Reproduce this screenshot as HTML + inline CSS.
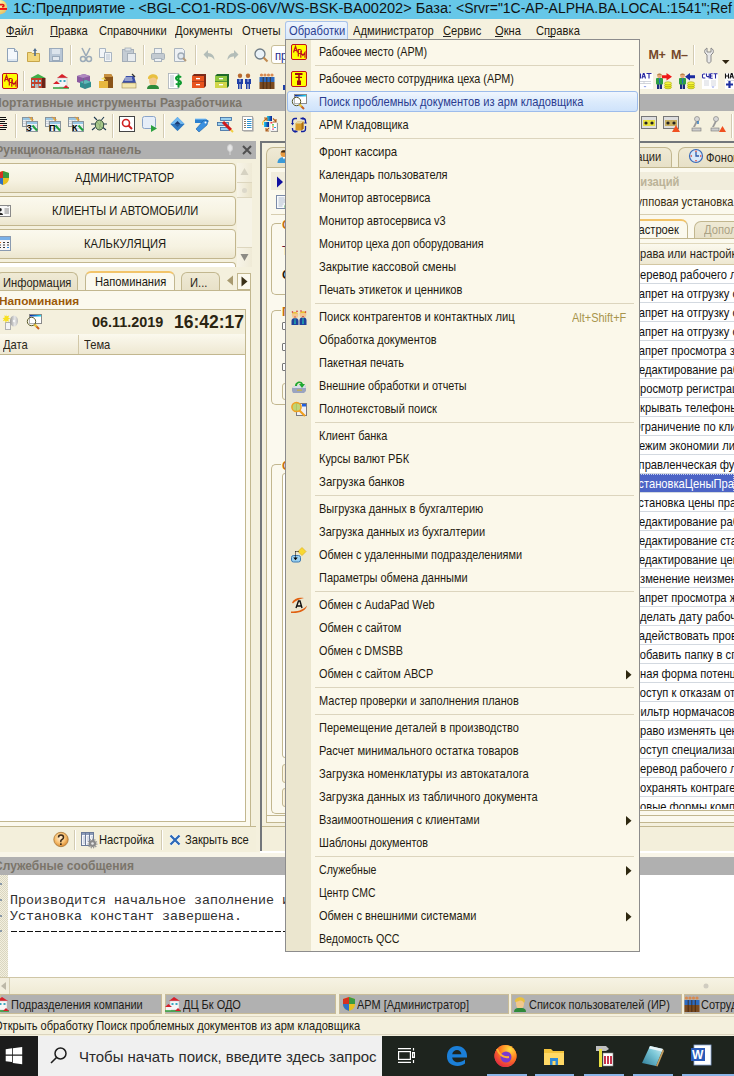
<!DOCTYPE html><html><head><meta charset="utf-8"><style>
*{margin:0;padding:0;box-sizing:border-box}
html,body{width:734px;height:1076px;overflow:hidden}
body{position:relative;background:#F4F0DD;font-family:"Liberation Sans",sans-serif;font-size:11px;color:#000}
body div{position:absolute}
.t{white-space:nowrap;line-height:1}
.m{font-size:12.2px;transform:scaleX(.917);transform-origin:0 0}
svg{position:absolute;overflow:visible}
</style></head><body>
<div style="left:0px;top:0px;width:734px;height:19px;background:#66C7E8"></div>
<svg style="left:0;top:0" width="10" height="18"><defs><radialGradient id="lg1" cx=".3" cy=".25" r=".85"><stop offset="0" stop-color="#FFFCE8"/><stop offset=".55" stop-color="#F6E27A"/><stop offset="1" stop-color="#E2B868"/></radialGradient></defs><circle cx="0" cy="7.2" r="7.2" fill="url(#lg1)"/><rect x="0" y="8" width="7" height="1.9" fill="#F01010"/><path d="M0 4.6h2.6q1.3 0 1.3 1.1t-1.3 1.1H2" stroke="#E01818" stroke-width="1.6" fill="none"/></svg>
<div class="t" style="left:13px;top:-0.5px;font-size:15.5px;color:#111;transform:scaleX(.939);transform-origin:0 0">1C:Предприятие - &lt;BGL-CO1-RDS-06V/WS-BSK-BA00202&gt; База:</div>
<div class="t" style="left:455.5px;top:-0.5px;font-size:15.5px;color:#111;transform:scaleX(.9004);transform-origin:0 0">&lt;Srvr="1C-AP-ALPHA.BA.LOCAL:1541";Ref</div>
<div style="left:0px;top:19px;width:734px;height:21px;background:#F5F1DF"></div>
<div style="left:285px;top:21px;width:63px;height:19px;background:linear-gradient(#EEF5FD,#D8E8FB);border:1px solid #A9C3EA;border-bottom:none;border-radius:3px 3px 0 0"></div>
<div class="t m" style="left:6px;top:25px;color:#1E1A10">Файл</div>
<div class="t m" style="left:50px;top:25px;color:#1E1A10">Правка</div>
<div class="t m" style="left:99px;top:25px;color:#1E1A10">Справочники</div>
<div class="t m" style="left:175px;top:25px;color:#1E1A10">Документы</div>
<div class="t m" style="left:242px;top:25px;color:#1E1A10">Отчеты</div>
<div class="t m" style="left:289px;top:25px;color:#2B3F93">Обработки</div>
<div class="t m" style="left:353px;top:25px;color:#1E1A10">Администратор</div>
<div class="t m" style="left:443px;top:25px;color:#1E1A10">Сервис</div>
<div class="t m" style="left:495px;top:25px;color:#1E1A10">Окна</div>
<div class="t m" style="left:536px;top:25px;color:#1E1A10">Справка</div>
<div style="left:6px;top:36px;width:11px;height:1px;background:#222"></div>
<div style="left:50px;top:36px;width:8px;height:1px;background:#222"></div>
<div style="left:443px;top:36px;width:8px;height:1px;background:#222"></div>
<div style="left:495px;top:36px;width:8px;height:1px;background:#222"></div>
<div style="left:548px;top:36px;width:7px;height:1px;background:#222"></div>
<div style="left:0px;top:40px;width:734px;height:54px;background:#F5F1DF"></div>
<svg style="left:4px;top:47px" width="16" height="16" viewBox="0 0 16 16"><path d="M3.5 1.5h7l3 3v10h-10z" fill="#F4F8FC" stroke="#8FA2B8"/><path d="M10.5 1.5v3h3" fill="#DDE6F0" stroke="#8FA2B8"/><path d="M4 12h9v2H4z" fill="#DCE6F0"/></svg>
<svg style="left:26px;top:47px" width="16" height="16" viewBox="0 0 16 16"><path d="M1.5 5.5h4l1 1h7v8h-12z" fill="#F2D77C" stroke="#C7A54A"/><path d="M9 1l-2 3h1.2v5h1.6v-5h1.2z" fill="#4E6D8E"/></svg>
<svg style="left:48px;top:47px" width="16" height="16" viewBox="0 0 16 16"><rect x="1.5" y="1.5" width="13" height="13" fill="#B9C7D6" stroke="#9AAABB"/><rect x="4" y="2" width="8" height="5" fill="#DCE4EC"/><rect x="4.5" y="9.5" width="7" height="4" fill="#E2E8EE" stroke="#9AAABB"/></svg>
<svg style="left:78px;top:47px" width="16" height="16" viewBox="0 0 16 16"><path d="M4 1l4 8M12 1l-4 8" stroke="#9BAAB8" stroke-width="1.6"/><circle cx="5" cy="12" r="2.5" fill="none" stroke="#9BAAB8" stroke-width="1.5"/><circle cx="11" cy="12" r="2.5" fill="none" stroke="#9BAAB8" stroke-width="1.5"/></svg>
<svg style="left:98px;top:47px" width="16" height="16" viewBox="0 0 16 16"><path d="M1.5 1.5h6v9h-6z" fill="#F2F5F8" stroke="#A9B5C2"/><path d="M6.5 5.5h7v9h-7z" fill="#F2F5F8" stroke="#A9B5C2"/><path d="M8 8h4M8 10h4M8 12h4" stroke="#B7C2CE"/></svg>
<svg style="left:121px;top:47px" width="16" height="16" viewBox="0 0 16 16"><rect x="1.5" y="2.5" width="11" height="12" fill="#C4CCD4" stroke="#A4AEB8"/><rect x="4" y="1" width="6" height="3" fill="#DDE2E6" stroke="#A4AEB8" stroke-width=".8"/><rect x="6.5" y="6.5" width="8" height="8" fill="#E8ECEF" stroke="#A4AEB8"/></svg>
<svg style="left:150px;top:47px" width="16" height="16" viewBox="0 0 16 16"><rect x="4.5" y="1.5" width="7" height="5" fill="#EEF1F4" stroke="#AAB4BE"/><rect x="1.5" y="6.5" width="13" height="6" rx="1" fill="#C3CAD1" stroke="#A5AFB8"/><rect x="4.5" y="11.5" width="7" height="3" fill="#EEF1F4" stroke="#AAB4BE"/></svg>
<svg style="left:172px;top:47px" width="16" height="16" viewBox="0 0 16 16"><path d="M2.5 1.5h8l2 2v11h-10z" fill="#EEF1F4" stroke="#AAB4BE"/><circle cx="9" cy="9" r="3" fill="#E2E8EE" stroke="#9FAAB5" stroke-width="1.3"/><path d="M11 11l3 3" stroke="#B59A7A" stroke-width="2"/></svg>
<svg style="left:202px;top:47px" width="16" height="16" viewBox="0 0 16 16"><path d="M6 3L1.5 7.5 6 12V9.5c3 0 5 1 6.5 3.5 0-4-2.5-7-6.5-7z" fill="#B3BDB8"/></svg>
<svg style="left:224px;top:47px" width="16" height="16" viewBox="0 0 16 16"><path d="M10 3l4.5 4.5L10 12V9.5c-3 0-5 1-6.5 3.5 0-4 2.5-7 6.5-7z" fill="#B3BDB8"/></svg>
<svg style="left:253px;top:47px" width="16" height="16" viewBox="0 0 16 16"><circle cx="7" cy="7" r="5" fill="#EAF2F8" stroke="#6F7C86" stroke-width="1.3"/><path d="M10.5 10.5l4 4" stroke="#C08A50" stroke-width="2.2"/></svg>
<div style="left:70px;top:45px;width:1px;height:20px;background:#D3CBB2"></div>
<div style="left:71px;top:45px;width:1px;height:20px;background:#FFFFFF"></div>
<div style="left:143px;top:45px;width:1px;height:20px;background:#D3CBB2"></div>
<div style="left:144px;top:45px;width:1px;height:20px;background:#FFFFFF"></div>
<div style="left:195px;top:45px;width:1px;height:20px;background:#D3CBB2"></div>
<div style="left:196px;top:45px;width:1px;height:20px;background:#FFFFFF"></div>
<div style="left:245px;top:45px;width:1px;height:20px;background:#D3CBB2"></div>
<div style="left:246px;top:45px;width:1px;height:20px;background:#FFFFFF"></div>
<div style="left:271px;top:45px;width:30px;height:19px;background:#FFF;border:1px solid #C9BE98;border-radius:3px 0 0 3px"></div>
<div class="t m" style="left:275px;top:50px;color:#1B2A8A;">пр</div>
<div class="t" style="left:648.5px;top:48.5px;font-weight:bold;font-size:12.5px;color:#74482A;letter-spacing:-0.3px">M+</div>
<div class="t" style="left:671px;top:48.5px;font-weight:bold;font-size:12.5px;color:#74482A;letter-spacing:-0.3px">M–</div>
<div style="left:693px;top:45px;width:1px;height:20px;background:#D3CBB2"></div>
<div style="left:694px;top:45px;width:1px;height:20px;background:#FFFFFF"></div>
<svg style="left:702px;top:47px" width="12" height="16" viewBox="0 0 12 16"><path d="M5 1c-2 1-3 3-2 5l2 2v6c0 1 1 2 2 2s2-1 2-2V8l2-2c1-2 0-4-2-5v4H5z" fill="#E8E8E8" stroke="#8A8A8A"/></svg>
<svg style="left:722px;top:60px" width="8" height="4" viewBox="0 0 8 4"><path d="M0 0h7.5l-3.75 4z" fill="#2E2410"/></svg>
<svg style="left:2px;top:73px" width="16" height="16" viewBox="0 0 16 16"><rect x="0.5" y="0.5" width="15" height="15" rx="1.5" fill="#FFFF00" stroke="#C0141C"/><path d="M2.5 8.5L4.5 2.5L6.5 8.5M3.2 6.5H5.8M7.3 12.5V5.5H9Q10.5 5.5 10.5 7.5Q10.5 9.5 9 9.5H7.3M9.8 13.8V8.5L11.9 11.5L14 8.5V13.8" stroke="#C0141C" stroke-width="1.2" fill="none"/></svg>
<svg style="left:30px;top:73px" width="16" height="16" viewBox="0 0 16 16"><path d="M0.5 5l7.5-4 7.5 4z" fill="#3FAF48"/><rect x="1" y="5" width="11" height="10" fill="#C0452E"/><rect x="12" y="5" width="3.5" height="10" fill="#6A2418"/><path d="M2 7h2v2H2zM5.5 7h2v2h-2zM9 7h2v2H9zM2 11h2v2H2zM9 11h2v2H9z" fill="#8FD8F0"/><rect x="5" y="11" width="3.5" height="4" fill="#B8B8B8"/></svg>
<svg style="left:53px;top:73px" width="16" height="16" viewBox="0 0 16 16"><path d="M4 5l5-4 6 4z" fill="#D8202A"/><rect x="5" y="5" width="9" height="9" fill="#F6F6F6" stroke="#BBB" stroke-width=".5"/><path d="M6.5 7h2v2h-2zM10.5 7h2v2h-2z" fill="#3BA7C0"/><path d="M0 11l3.5-3 3.5 3z" fill="#D8202A"/><rect x="1" y="11" width="5" height="4" fill="#F4F4F4"/><path d="M0 15h16" stroke="#2E9E3A" stroke-width="1.5"/><path d="M10 15l3-3 3 3z" fill="#D8202A"/></svg>
<svg style="left:76px;top:73px" width="16" height="16" viewBox="0 0 16 16"><path d="M1 3l7-2 6 2v6l-7 2-6-2z" fill="#8B5AA0"/><path d="M1 3l7-2 6 2-7 2z" fill="#B08AC0"/><path d="M4 9l6-2 5 2v5l-6 2-5-2z" fill="#2E8E8E"/><path d="M4 9l6-2 5 2-6 2z" fill="#60B8B8"/><path d="M7.5 5v6M9 11v5" stroke="#5A7A8A" stroke-width=".8"/></svg>
<svg style="left:98px;top:73px" width="16" height="16" viewBox="0 0 16 16"><path d="M6 1h7l2 3v6H6z" fill="#8A5418"/><path d="M6 1h7l2 3H6z" fill="#C89040"/><path d="M1 8h9v7H1z" fill="#E8B840"/><path d="M10 8h5v7h-5z" fill="#8A5418"/><path d="M3 6l3-2 2 3" fill="#F8E060"/></svg>
<svg style="left:121px;top:73px" width="16" height="16" viewBox="0 0 16 16"><path d="M1 10l4-7h8l2 7z" fill="#3B4FA8"/><path d="M4 5h7M3.5 7h8" stroke="#F0F0F0" stroke-width="1"/><rect x="1" y="10" width="14" height="5" fill="#F3E7B0" stroke="#A08A50" stroke-width=".6"/><path d="M11 1l3 3" stroke="#333" stroke-width="1.2"/></svg>
<svg style="left:145px;top:73px" width="16" height="16" viewBox="0 0 16 16"><path d="M4 6c0-5 8-6 8-1v3c0 3-2 5-4 5s-4-2-4-5z" fill="#F1C88D"/><path d="M3 6c-1-5 9-7 10-1l-1 2c-1-2-3-3-5-2-1 0-2 1-4 1z" fill="#E8C040"/><path d="M2 16c0-3 2-4 4-4h4c2 0 4 1 4 4z" fill="#2E8A3A"/></svg>
<svg style="left:168px;top:73px" width="16" height="16" viewBox="0 0 16 16"><rect x="0.5" y="0.5" width="10" height="15" fill="#FFF" stroke="#A8B0B8" stroke-width=".8"/><path d="M2 3h4M2 5h4M2 7h4M2 9h4M2 11h4M2 13h4" stroke="#8899AA" stroke-width=".6"/><path d="M13 4.5c-1-1.5-5-1.5-5 1s5 1.5 5 4-4 2.5-5 1M10.5 1.5v13" stroke="#0E9A30" stroke-width="2" fill="none"/></svg>
<svg style="left:191px;top:73px" width="16" height="16" viewBox="0 0 16 16"><path d="M3 1h12v12l-2 2H1V3z" fill="#7A2A1A"/><rect x="1" y="3" width="12" height="5.5" fill="#E8541E"/><rect x="1" y="9" width="12" height="6" fill="#E8541E"/><rect x="5" y="5" width="4" height="1.3" fill="#FFF"/><rect x="5" y="11" width="4" height="1.3" fill="#FFF"/></svg>
<svg style="left:214px;top:73px" width="16" height="16" viewBox="0 0 16 16"><path d="M3 1h12v12l-2 2H1V3z" fill="#1F6A2A"/><rect x="1" y="3" width="12" height="5.5" fill="#8DC63F"/><rect x="1" y="9" width="12" height="6" fill="#D2D74A"/><rect x="5" y="5" width="4" height="1.3" fill="#FFF"/><rect x="5" y="11" width="4" height="1.3" fill="#FFF"/></svg>
<svg style="left:236px;top:73px" width="16" height="16" viewBox="0 0 16 16"><circle cx="4" cy="2.8" r="2.2" fill="#B86A30"/><circle cx="12" cy="2.8" r="2.2" fill="#B86A30"/><path d="M1 6h6v5H6v5H4.5v-5h-1v5H2v-5H1zM9 6h6v5h-1v5h-1.5v-5h-1v5H10v-5H9z" fill="#1F3FA8"/><path d="M4 6v3M12 6v3" stroke="#E8E8F8" stroke-width=".8"/></svg>
<svg style="left:259px;top:73px" width="16" height="16" viewBox="0 0 16 16"><circle cx="2.5" cy="2" r="1.6" fill="#D88A50"/><circle cx="6" cy="2" r="1.6" fill="#D88A50"/><circle cx="9.5" cy="2" r="1.6" fill="#D88A50"/><circle cx="13" cy="2" r="1.6" fill="#D88A50"/><rect x="0.5" y="4" width="15" height="5" fill="#2C6AC0"/><rect x="0.5" y="9" width="15" height="7" fill="#7A4A20"/><path d="M4.2 4v12M7.8 4v12M11.3 4v12" stroke="#3E2410" stroke-width=".8"/></svg>
<svg style="left:637px;top:73px" width="16" height="16" viewBox="0 0 16 16"><rect x="0" y="0" width="16" height="16" fill="#FFF"/><path d="M.5 5.5V.5M3.5 5.5V.5M.5 3h3M5 5.5L6.3.5h.8L8.5 5.5M5.6 3.8h2.3M9.5.5h5M12 .5v5" stroke="#2828A0" stroke-width="1.1" fill="none"/><path d="M2 8.5h12M2 10.5h12M7 8v3" stroke="#C8CCD4" stroke-width=".8"/><path d="M6.5 13h3L8 14.5z" fill="#8A9AE8"/></svg>
<svg style="left:656px;top:73px" width="16" height="16" viewBox="0 0 16 16"><rect x="1" y="11" width="5" height="5" fill="#1A2A80"/><path d="M3.5 11v5" stroke="#F5F1DF" stroke-width=".6"/><rect x="0" y="5" width="7" height="6.5" rx="1" fill="#2EA040"/><rect x="3" y="5" width="1.2" height="5.5" fill="#2A6AC0"/><circle cx="3.5" cy="2.8" r="2.4" fill="#E8A878"/><path d="M1 2.5C1 0 6 0 6 2.5L5 1.5H2z" fill="#8A5A20"/><path d="M6 2.3h4.5V0l5.5 3.8-5.5 3.8V5.3H6z" fill="#F01818"/><ellipse cx="12" cy="14.3" rx="3.5" ry="1.5" fill="#E8E818" stroke="#A0A010" stroke-width=".6"/><ellipse cx="12" cy="12.3" rx="3.5" ry="1.5" fill="#F0F020" stroke="#A0A010" stroke-width=".6"/><ellipse cx="12" cy="10.3" rx="3.5" ry="1.5" fill="#F8F840" stroke="#A0A010" stroke-width=".6"/></svg>
<svg style="left:679px;top:73px" width="16" height="16" viewBox="0 0 16 16"><rect x="1" y="11" width="5" height="5" fill="#1A2A80"/><path d="M3.5 11v5" stroke="#F5F1DF" stroke-width=".6"/><rect x="0" y="5" width="7" height="6.5" rx="1" fill="#2EA040"/><rect x="3" y="5" width="1.2" height="5.5" fill="#2A6AC0"/><circle cx="3.5" cy="2.8" r="2.4" fill="#E8A878"/><path d="M1 2.5C1 0 6 0 6 2.5L5 1.5H2z" fill="#8A5A20"/><path d="M16 2.3h-5V0L6 3.8l5 3.8V5.3h5z" fill="#1A2AA0"/><ellipse cx="12" cy="14.3" rx="3.5" ry="1.5" fill="#E8E818" stroke="#A0A010" stroke-width=".6"/><ellipse cx="12" cy="12.3" rx="3.5" ry="1.5" fill="#F0F020" stroke="#A0A010" stroke-width=".6"/><ellipse cx="12" cy="10.3" rx="3.5" ry="1.5" fill="#F8F840" stroke="#A0A010" stroke-width=".6"/></svg>
<svg style="left:702px;top:73px" width="16" height="16" viewBox="0 0 16 16"><rect x="0" y="0" width="16" height="16" fill="#FFF"/><path d="M3.3 1H1.5q-1 0-1 1v2q0 1 1 1h1.8M4.5.5v2.3q0 .8 1 .8h1.5M7.2.5v5M8.5.5v5M8.5.8h2.2M8.5 3h2M8.5 5.2h2.2M11.5.8h4M13.5.8v4.7" stroke="#2828A0" stroke-width="1.1" fill="none"/><path d="M2 8h5M9 8h5M2 10h5M9 10h5M2 12h5M9 12h5" stroke="#C8CCD4" stroke-width=".8"/><path d="M9.5 13.5h3L11 15z" fill="#8A9AE8"/></svg>
<svg style="left:725px;top:73px" width="16" height="16" viewBox="0 0 16 16"><rect x="0" y="0" width="16" height="16" fill="#FFF"/><path d="M.5 5.5V.5M3.5 5.5V.5M.5 3h3M5 5.5L6.3.5h.8L8.5 5.5M5.6 3.8h2.3M10 .5v5M14 .5L11 3l3 2.5" stroke="#111" stroke-width="1.1" fill="none"/><path d="M2 7.5h12" stroke="#C8CCD4" stroke-width=".8"/><path d="M1 11.5h7M4.5 8v7" stroke="#1F2FA0" stroke-width="2.2"/></svg>
<div style="left:23px;top:71px;width:1px;height:20px;background:#D3CBB2"></div>
<div style="left:24px;top:71px;width:1px;height:20px;background:#FFFFFF"></div>
<div style="left:283px;top:85px;width:4px;height:5px;background:#1F3FA8"></div>
<div style="left:0px;top:94px;width:734px;height:17px;background:#B0B0B0"></div>
<div class="t" style="left:-7px;top:97px;font-weight:bold;font-size:12px;color:#7B756A">Портативные инструменты Разработчика</div>
<div style="left:0px;top:111px;width:734px;height:30px;background:#F5F1DF"></div>
<svg style="left:0px;top:116px" width="16" height="16" viewBox="0 0 16 16"><path d="M0 1.5h6M0 3.5h7M0 5.5h5M0 7.5h7M0 9.5h7M0 11.5h7M0 13.5h6" stroke="#111" stroke-width="1"/><path d="M0 9.5h3" stroke="#E83030"/></svg>
<svg style="left:22px;top:116px" width="16" height="16" viewBox="0 0 16 16"><rect x="0.5" y="1.5" width="10" height="9" fill="#EEF1F4" stroke="#8A949C"/><path d="M1 3h9" stroke="#7AB8E0" stroke-width="1.5"/><path d="M1 5.5h9M1 7.5h9M4 3v7M7 3v7" stroke="#B8C0C8" stroke-width=".6"/><rect x="4.5" y="5.5" width="11" height="10" fill="#F2F4F6" stroke="#8A949C"/><path d="M5 7h10" stroke="#7AB8E0" stroke-width="1.5"/><path d="M5 10h10M5 12.5h10" stroke="#B8C0C8" stroke-width=".6"/><path d="M7 0.5l1 2 2-1.5-.7 2.3 2.2.5-2.2.8" fill="#F8C020" stroke="#F08A20" stroke-width=".5"/><path d="M10.5 9.5l4.5 5" stroke="#1FA040" stroke-width="2"/><text x="4.2" y="14.5" font-size="9" font-family="Liberation Sans" font-weight="bold" fill="#000">З</text></svg>
<svg style="left:45px;top:116px" width="16" height="16" viewBox="0 0 16 16"><rect x="0.5" y="1.5" width="10" height="9" fill="#EEF1F4" stroke="#8A949C"/><path d="M1 3h9" stroke="#7AB8E0" stroke-width="1.5"/><path d="M1 5.5h9M1 7.5h9M4 3v7M7 3v7" stroke="#B8C0C8" stroke-width=".6"/><rect x="4.5" y="5.5" width="11" height="10" fill="#F2F4F6" stroke="#8A949C"/><path d="M5 7h10" stroke="#7AB8E0" stroke-width="1.5"/><path d="M5 10h10M5 12.5h10" stroke="#B8C0C8" stroke-width=".6"/><path d="M7 0.5l1 2 2-1.5-.7 2.3 2.2.5-2.2.8" fill="#F8C020" stroke="#F08A20" stroke-width=".5"/><path d="M10.5 9.5l4.5 5" stroke="#1FA040" stroke-width="2"/><text x="4" y="14.5" font-size="9" font-family="Liberation Sans" font-weight="bold" fill="#000">П</text></svg>
<svg style="left:68px;top:116px" width="16" height="16" viewBox="0 0 16 16"><rect x="0.5" y="1.5" width="10" height="9" fill="#EEF1F4" stroke="#8A949C"/><path d="M1 3h9" stroke="#7AB8E0" stroke-width="1.5"/><path d="M1 5.5h9M1 7.5h9M4 3v7M7 3v7" stroke="#B8C0C8" stroke-width=".6"/><rect x="4.5" y="5.5" width="11" height="10" fill="#F2F4F6" stroke="#8A949C"/><path d="M5 7h10" stroke="#7AB8E0" stroke-width="1.5"/><path d="M5 10h10M5 12.5h10" stroke="#B8C0C8" stroke-width=".6"/><path d="M7 0.5l1 2 2-1.5-.7 2.3 2.2.5-2.2.8" fill="#F8C020" stroke="#F08A20" stroke-width=".5"/><path d="M10.5 9.5l4.5 5" stroke="#1FA040" stroke-width="2"/><text x="4" y="14.5" font-size="9" font-family="Liberation Sans" font-weight="bold" fill="#000">К</text></svg>
<svg style="left:91px;top:116px" width="16" height="16" viewBox="0 0 16 16"><ellipse cx="8.5" cy="9" rx="4.2" ry="5" fill="#A8C88A" stroke="#1E3A2E" stroke-width=".9"/><path d="M6 6l5 6M10 5l-2 9" stroke="#7A9A6A" stroke-width=".6"/><path d="M3 1l3 3M13 1l-2.5 3M0 8h4M13 8h3M1 14l3-2.5M15 14l-3-2.5" stroke="#1E3A4E" stroke-width="1.1"/></svg>
<svg style="left:119px;top:116px" width="16" height="16" viewBox="0 0 16 16"><rect x="0.5" y="0.5" width="15" height="15" fill="#FFF" stroke="#444"/><circle cx="7" cy="7" r="3.5" fill="none" stroke="#D02020" stroke-width="1.6"/><path d="M9.5 9.5l3.5 3.5" stroke="#D02020" stroke-width="2"/></svg>
<svg style="left:142px;top:116px" width="16" height="16" viewBox="0 0 16 16"><rect x="0.5" y="0.5" width="13" height="12" rx="2" fill="#E6EEF8" stroke="#8AA4C8"/><path d="M9 9l6 3.5-6 3.5z" fill="#2AA040"/></svg>
<svg style="left:170px;top:116px" width="16" height="16" viewBox="0 0 16 16"><path d="M7.5 1l7 7-7 7-7-7z" fill="#3A88D0"/><path d="M7.5 1l7 7H.5z" fill="#70B8F0"/><path d="M7.5 5l3 3-3 3-3-3z" fill="#1A3A70"/><path d="M.5 8h14l-7 7z" fill="#2A70B8" fill-opacity=".6"/></svg>
<svg style="left:194px;top:116px" width="16" height="16" viewBox="0 0 16 16"><path d="M1 3h11l3 2-3 2H1z" fill="#2A80D0"/><path d="M2 13l8-9 4 1-1 4-8 7z" fill="#3A90E0" stroke="#1A5AA0" stroke-width=".6"/><circle cx="11.5" cy="6.5" r="1" fill="#FFF"/><path d="M1 3h11" stroke="#8AC8F8"/></svg>
<svg style="left:217px;top:116px" width="16" height="16" viewBox="0 0 16 16"><rect x="3.5" y="1.5" width="11" height="3" fill="#9AD0F0" stroke="#3A6AA0" stroke-width=".8"/><rect x="0.5" y="6.5" width="11" height="3" fill="#9AD0F0" stroke="#3A6AA0" stroke-width=".8"/><rect x="3.5" y="11.5" width="9" height="3" fill="#9AD0F0" stroke="#3A6AA0" stroke-width=".8"/><path d="M6 6l8 8" stroke="#D01818" stroke-width="3"/><path d="M14 14l2 2" stroke="#F0D040" stroke-width="2"/></svg>
<svg style="left:242px;top:116px" width="16" height="16" viewBox="0 0 16 16"><rect x="1.5" y="1.5" width="10" height="14" fill="#9A9A9A"/><rect x="0.5" y="0.5" width="10" height="14" fill="#FFF" stroke="#A8A8A8"/><path d="M2 3.5h2M2 5.5h2M2 7.5h2M2 9.5h2M2 11.5h2" stroke="#8A7A6A"/><path d="M5 3.5h4.5M5 5.5h4.5M5 7.5h4.5M5 9.5h4.5M5 11.5h4.5" stroke="#2A90D0"/></svg>
<svg style="left:262px;top:116px" width="16" height="16" viewBox="0 0 16 16"><defs><linearGradient id="cbg" x1="0" x2="1"><stop offset="0" stop-color="#20D0F0"/><stop offset="1" stop-color="#0A1A90"/></linearGradient></defs><rect x="5" y="0" width="5" height="5" fill="url(#cbg)"/><rect x="2" y="6" width="5" height="5" fill="url(#cbg)"/><rect x="9" y="7" width="7" height="9" fill="#888"/><rect x="8" y="6" width="7" height="9" fill="#FFF" stroke="#C8C8C8" stroke-width=".5"/><path d="M8.5 6.8h2" stroke="#F01010" stroke-width="1.2"/><path d="M10 8.8h2" stroke="#40C040" stroke-width="1.2"/><path d="M10 10.8h2M12 11.5h2" stroke="#F0A040" stroke-width="1.2"/><path d="M12 11.5h2" stroke="#20A0E0" stroke-width="1.2"/><path d="M10 13.2h2" stroke="#E060A0" stroke-width="1.2"/><path d="M2 5l3-3M2 2h3v3M11 2.5l3 3M14 3v3h-3M4 15l3-3M4 12v3h3" stroke="#B06020" stroke-width="1.1" fill="none"/><path d="M1 9c-1-2 0-4 1.5-5" stroke="#F0C020" fill="none"/></svg>
<svg style="left:641px;top:116px" width="16" height="16" viewBox="0 0 16 16"><rect x="0.5" y="0.5" width="15" height="12" fill="#DEDEDE" stroke="#777"/><rect x="2" y="4" width="12" height="6" fill="#E8E040"/><circle cx="5" cy="7" r="1.6" fill="#222"/><circle cx="11" cy="7" r="1.6" fill="#222"/></svg>
<svg style="left:663px;top:116px" width="16" height="16" viewBox="0 0 16 16"><rect x="0.5" y="0.5" width="15" height="12" fill="#DEDEDE" stroke="#777"/><rect x="2" y="4" width="12" height="6" fill="#C8B060"/><circle cx="5" cy="7" r="1.6" fill="#222"/><circle cx="11" cy="7" r="1.6" fill="#222"/><path d="M11 16l4-7 4 7z" fill="#F05020" transform="translate(-2 0)"/></svg>
<svg style="left:689px;top:116px" width="16" height="16" viewBox="0 0 16 16"><circle cx="8" cy="3" r="2.5" fill="#D8D8D8" stroke="#777" stroke-width=".6"/><path d="M7 5l-3 6h2l3-6z" fill="#999"/><rect x="3" y="12" width="9" height="3" fill="#CCC" stroke="#777" stroke-width=".6"/><path d="M9 5v3" stroke="#2E78C0" stroke-width="1.5"/></svg>
<svg style="left:709px;top:116px" width="16" height="16" viewBox="0 0 16 16"><circle cx="7" cy="3" r="2.5" fill="#D8D8D8" stroke="#777" stroke-width=".6"/><path d="M6 5l-3 6h2l3-6z" fill="#999"/><rect x="2" y="12" width="8" height="3" fill="#CCC" stroke="#777" stroke-width=".6"/><path d="M10 16l3.5-6 3.5 6z" fill="#F05020"/></svg>
<div style="left:15px;top:114px;width:1px;height:24px;background:#D3CBB2"></div>
<div style="left:16px;top:114px;width:1px;height:24px;background:#FFFFFF"></div>
<div style="left:112px;top:114px;width:1px;height:24px;background:#D3CBB2"></div>
<div style="left:113px;top:114px;width:1px;height:24px;background:#FFFFFF"></div>
<div style="left:163px;top:114px;width:1px;height:24px;background:#D3CBB2"></div>
<div style="left:164px;top:114px;width:1px;height:24px;background:#FFFFFF"></div>
<div style="left:731px;top:114px;width:1px;height:24px;background:#D3CBB2"></div>
<div style="left:732px;top:114px;width:1px;height:24px;background:#FFFFFF"></div>
<div style="left:0px;top:141px;width:256px;height:18px;background:#B0B0B0"></div>
<div class="t" style="left:-7px;top:144px;font-weight:bold;font-size:12px;color:#7B756A">Функциональная панель</div>
<svg style="left:226px;top:144px" width="8" height="12" viewBox="0 0 8 12"><ellipse cx="4" cy="4" rx="2.5" ry="3.5" fill="#E6E6E6" stroke="#CFCFCF"/><path d="M4 7v4" stroke="#D8D8D8"/></svg>
<svg style="left:242px;top:145px" width="10" height="10" viewBox="0 0 10 10"><path d="M1 1l8 8M9 1l-8 8" stroke="#505050" stroke-width="2"/></svg>
<div style="left:0px;top:159px;width:256px;height:693px;background:#F4F0DD"></div>
<div style="left:-6px;top:163px;width:242px;height:30px;background:linear-gradient(#FBF9EE,#F6F2E1 60%,#ECE6CF);border:1px solid #C2B68E;border-radius:4px"></div>
<svg style="left:-5px;top:170px" width="16" height="16" viewBox="0 0 16 16"><path d="M8 1l6 2v5c0 4-3 6-6 7-3-1-6-3-6-7V3z" fill="#E8C020"/><path d="M8 1v7H2V3z" fill="#D83020"/><path d="M8 1l6 2v5H8z" fill="#3A9A40"/><path d="M2 8h6v7c-3-1-6-3-6-7z" fill="#2E70C8"/></svg>
<div class="t m" style="left:75px;top:172px;color:#1B1A12">АДМИНИСТРАТОР</div>
<div style="left:-6px;top:196px;width:242px;height:30px;background:linear-gradient(#FBF9EE,#F6F2E1 60%,#ECE6CF);border:1px solid #C2B68E;border-radius:4px"></div>
<svg style="left:-5px;top:203px" width="16" height="16" viewBox="0 0 16 16"><rect x="0.5" y="2.5" width="15" height="11" fill="#F8F8F8" stroke="#8A8A8A"/><path d="M3 2v2M13 2v2" stroke="#8A8A8A"/><circle cx="5" cy="6.8" r="1.8" fill="#222"/><path d="M2 12c0-3 6-3 6 0z" fill="#222"/><path d="M9.5 6h4.5M9.5 8h4.5M9.5 10h4.5" stroke="#7A7A7A" stroke-width=".9"/></svg>
<div class="t m" style="left:52px;top:205px;color:#1B1A12">КЛИЕНТЫ И АВТОМОБИЛИ</div>
<div style="left:-6px;top:229px;width:242px;height:30px;background:linear-gradient(#FBF9EE,#F6F2E1 60%,#ECE6CF);border:1px solid #C2B68E;border-radius:4px"></div>
<svg style="left:-5px;top:236px" width="16" height="16" viewBox="0 0 16 16"><rect x="0.5" y="0.5" width="15" height="14" fill="#F8F8F8" stroke="#8A9AB0"/><rect x="1" y="1" width="14" height="3" fill="#7AB0E8"/><path d="M4 6.5h2M8 6.5h2M12 6.5h2M4 9h2M8 9h2M12 9h2M4 11.5h2M8 11.5h2" stroke="#3A3A3A" stroke-width="1.2"/><path d="M12 11.5h2" stroke="#2A8AE0" stroke-width="1.2"/><path d="M4 6.5h2" stroke="#E87A20" stroke-width="1.2"/></svg>
<div class="t m" style="left:84px;top:238px;color:#1B1A12">КАЛЬКУЛЯЦИЯ</div>
<div style="left:-6px;top:262px;width:242px;height:5px;background:#FFFFFF;border:1px solid #C2B68E;border-bottom:none;border-radius:4px 4px 0 0"></div>
<div style="left:0px;top:267px;width:256px;height:1px;background:#F4F0DD"></div>
<div style="left:237px;top:163px;width:15px;height:104px;background:#F6F3E6"></div>
<div style="left:237px;top:163px;width:15px;height:20px;background:linear-gradient(90deg,#F7F4E8,#EFEAD6);border-bottom:1px solid #DDD6BE"></div>
<svg style="left:240px;top:167px" width="9" height="10" viewBox="0 0 9 10"><path d="M4.5 1l4 7h-8z" fill="#D6D2C2"/></svg>
<div style="left:237px;top:183px;width:15px;height:15px;background:linear-gradient(90deg,#F7F4E8,#E9E2C8);border-bottom:1px solid #DDD6BE"></div>
<svg style="left:240px;top:186px" width="9" height="9" viewBox="0 0 9 9"><circle cx="4.5" cy="4.5" r="2.5" fill="#DCD8CA"/></svg>
<div style="left:237px;top:247px;width:15px;height:20px;background:linear-gradient(90deg,#F7F4E8,#EFEAD6);border-top:1px solid #DDD6BE"></div>
<svg style="left:240px;top:253px" width="9" height="9" viewBox="0 0 9 9"><path d="M.5 1h8l-4 7z" fill="#8C8A84"/></svg>
<div style="left:-4px;top:272px;width:82px;height:19px;background:linear-gradient(#EFEAD5,#E7E0C7);border:1px solid #C2B78F;border-bottom:none;border-radius:6px 6px 0 0"></div>
<div class="t m" style="left:3px;top:277px;color:#2A2618">Информация</div>
<div style="left:85px;top:271px;width:90px;height:20px;background:#FBF9EE;border:1px solid #C2B78F;border-bottom:none;border-radius:6px 6px 0 0;border-top:2px solid #F2C46A"></div>
<div class="t m" style="left:95px;top:276px;color:#1B1A12">Напоминания</div>
<div style="left:181px;top:272px;width:39px;height:19px;background:linear-gradient(#EFEAD5,#E7E0C7);border:1px solid #C2B78F;border-bottom:none;border-radius:6px 6px 0 0"></div>
<div class="t m" style="left:190px;top:277px;color:#2A2618">И...</div>
<svg style="left:226px;top:275px" width="8" height="11" viewBox="0 0 8 11"><path d="M7 0.5v10l-6-5z" fill="#A89A70"/></svg>
<div style="left:237px;top:273px;width:14px;height:17px;background:#FBF9EE;border:1px solid #C2B78F"></div>
<svg style="left:240px;top:276px" width="8" height="11" viewBox="0 0 8 11"><path d="M1.5 0.5v10l6-5z" fill="#3A3018"/></svg>
<div style="left:-4px;top:290px;width:255px;height:537px;background:#FBF9EE;border:1px solid #C2B78F"></div>
<div class="t" style="left:-1px;top:296px;font-weight:bold;font-size:11.8px;color:#9C5A0A">Напоминания</div>
<div style="left:-4px;top:309px;width:250px;height:26px;background:#F4F0DD;border:1px solid #C2B78F"></div>
<svg style="left:2px;top:313px" width="16" height="16" viewBox="0 0 16 16"><defs><linearGradient id="mgg" x1="0" x2="1"><stop offset="0" stop-color="#9A9A9A"/><stop offset=".6" stop-color="#E8E8E8"/><stop offset="1" stop-color="#B8B8B8"/></linearGradient></defs><rect x="3.5" y="9.5" width="5" height="7" fill="#F4F4F4" stroke="#B0B0B0"/><ellipse cx="12" cy="8" rx="4" ry="5.5" fill="url(#mgg)"/><circle cx="12" cy="8" r="1.2" fill="#F8F8F8"/><path d="M4 1l.9 2.2L7.2 2.5 6.3 4.7l2.2 1-2.3.7.8 2.3-2.2-1-1 2.2-.7-2.3-2.3.7 1.2-2L.5 5.2l2.3-.6L2.4 2.3l2 .9z" fill="#F8E020"/></svg>
<svg style="left:26px;top:314px" width="16" height="16" viewBox="0 0 16 16"><defs><linearGradient id="fwg" x1="0" x2="1"><stop offset="0" stop-color="#0A20A0"/><stop offset="1" stop-color="#20E0F8"/></linearGradient></defs><rect x="3.5" y="0.5" width="12" height="9" fill="#FFFFFF" stroke="#8A8A8A"/><rect x="4" y="1" width="11" height="1.5" fill="url(#fwg)"/><circle cx="5.5" cy="7.5" r="4.2" fill="#FFFFFF" fill-opacity=".35" stroke="#5A5A2A" stroke-width="1"/><path d="M8.5 10.5l4.5 4.5" stroke="#C86020" stroke-width="2"/><path d="M8.5 10.5l2 2" stroke="#E8D040" stroke-width="2"/></svg>
<div class="t" style="left:92px;top:315px;font-weight:bold;font-size:14.4px;color:#2B2412">06.11.2019</div>
<div class="t" style="left:174px;top:314px;font-weight:bold;font-size:17.5px;color:#2B2412">16:42:17</div>
<div style="left:-4px;top:334px;width:250px;height:21px;background:linear-gradient(#FBF9EE,#EEE8D2);border:1px solid #C2B78F;border-top:none"></div>
<div style="left:78px;top:335px;width:1px;height:19px;background:#D2C8A8"></div>
<div class="t m" style="left:3px;top:339px;color:#2A2618">Дата</div>
<div class="t m" style="left:84px;top:339px;color:#2A2618">Тема</div>
<div style="left:-4px;top:355px;width:250px;height:467px;background:#FFFFFF;border:1px solid #C2B78F;border-top:none"></div>
<div style="left:-4px;top:826px;width:260px;height:1px;background:#C2B78F"></div>
<div style="left:0px;top:827px;width:256px;height:25px;background:#F3EFDB"></div>
<svg style="left:53px;top:832px" width="16" height="16" viewBox="0 0 16 16"><defs><radialGradient id="hg" cx=".45" cy=".4" r=".6"><stop offset="0" stop-color="#FFF0D8"/><stop offset=".6" stop-color="#F8C070"/><stop offset="1" stop-color="#D88830"/></radialGradient></defs><circle cx="8" cy="7.5" r="7.2" fill="url(#hg)" stroke="#A87838" stroke-width=".8"/><path d="M5.5 5.5q0-2.5 2.5-2.5t2.5 2.3q0 1.5-1.5 2.2T7.8 9.5v.8" stroke="#3A2A18" stroke-width="1.5" fill="none"/><rect x="7" y="11.3" width="1.7" height="1.7" fill="#3A2A18"/></svg>
<div style="left:74px;top:830px;width:1px;height:20px;background:#D3CBB2"></div>
<div style="left:75px;top:830px;width:1px;height:20px;background:#FFFFFF"></div>
<svg style="left:81px;top:832px" width="16" height="16" viewBox="0 0 16 16"><rect x="0.5" y="0.5" width="12" height="13" fill="#F4F6FA" stroke="#6A7A98"/><rect x="1" y="1" width="11" height="2" fill="#8A9AB8"/><path d="M4.5 1v12M8.5 1v12" stroke="#6A7A98"/><path d="M2 5h2M2 7h2M2 9h2M2 11h2M6 5h2M6 7h2M6 9h2M10 5h2" stroke="#A8B4C8" stroke-width=".8"/><circle cx="11.5" cy="11.5" r="3.6" fill="#8A8A8A"/><circle cx="11.5" cy="11.5" r="4.3" fill="none" stroke="#9A9A9A" stroke-width="1.4" stroke-dasharray="1.3 1.1"/><circle cx="11.5" cy="11.5" r="1.3" fill="#E8E8E8"/></svg>
<div class="t m" style="left:99px;top:834px;color:#1B1A12">Настройка</div>
<div style="left:161px;top:830px;width:1px;height:20px;background:#D3CBB2"></div>
<div style="left:162px;top:830px;width:1px;height:20px;background:#FFFFFF"></div>
<svg style="left:168px;top:833px" width="14" height="14" viewBox="0 0 14 14"><path d="M2.5 2.5l9 9M11.5 2.5l-9 9" stroke="#FFFFFF" stroke-width="3.6"/><path d="M2.5 2.5l9 9M11.5 2.5l-9 9" stroke="#2E6AB8" stroke-width="2.4"/></svg>
<div class="t m" style="left:185px;top:834px;color:#1B1A12">Закрыть все</div>
<div style="left:0px;top:852px;width:260px;height:5px;background:#F8F5E8"></div>
<div style="left:260px;top:141px;width:474px;height:711px;background:#F4F0DD;border-left:2px solid #72767A;border-top:2px solid #72767A"></div>
<div style="left:266px;top:147px;width:56px;height:20px;background:linear-gradient(#EFEAD5,#E7E0C7);border:1px solid #C2B78F;border-bottom:none;border-radius:7px 7px 0 0"></div>
<svg style="left:277px;top:149px" width="14" height="14" viewBox="0 0 14 14"><circle cx="7" cy="4.5" r="3.5" fill="#E89A40"/><path d="M4 3.5c0-3 6-3 6 0" fill="#3A2A18"/><path d="M0.5 14c0-4 3-6 6.5-6s6.5 2 6.5 6z" fill="#3A9AD8"/><path d="M5.5 8h3l-1.5 2.5z" fill="#FFF"/></svg>
<div style="left:600px;top:147px;width:72px;height:20px;background:linear-gradient(#EFEAD5,#E7E0C7);border:1px solid #C2B78F;border-bottom:none;border-radius:7px 7px 0 0"></div>
<div class="t m" style="left:608.5px;top:151px;color:#2A2618">Операции</div>
<div style="left:678px;top:147px;width:70px;height:20px;background:linear-gradient(#EFEAD5,#E7E0C7);border:1px solid #C2B78F;border-bottom:none;border-radius:7px 7px 0 0"></div>
<svg style="left:689px;top:149px" width="14" height="14" viewBox="0 0 14 14"><circle cx="7" cy="7" r="6.5" fill="#D8E8F8" stroke="#3A6AB8" stroke-width="1.2"/><path d="M7 3v4h3" stroke="#2E5AA8" stroke-width="1.3" fill="none"/><circle cx="7" cy="2.3" r=".8" fill="#E03020"/><circle cx="11.7" cy="7" r=".8" fill="#E03020"/><circle cx="7" cy="11.7" r=".8" fill="#E03020"/><circle cx="2.3" cy="7" r=".8" fill="#E03020"/></svg>
<div class="t m" style="left:706px;top:152px;color:#2A2618">Фоновые задания</div>
<div style="left:266px;top:167px;width:474px;height:656px;background:#FBF9EE;border:1px solid #C2B78F"></div>
<div style="left:271px;top:172px;width:463px;height:18px;background:#F1EDDC"></div>
<svg style="left:276px;top:176px" width="8" height="12" viewBox="0 0 8 12"><path d="M1 0.5v11l6-5.5z" fill="#1010A0"/></svg>
<div class="t m" style="left:547px;top:176px;font-weight:bold;color:#BBB398">Настройки организаций</div>
<svg style="left:276px;top:195px" width="16" height="16" viewBox="0 0 16 16"><rect x="0.5" y="0.5" width="11" height="13" fill="#F8FAFC" stroke="#7A8AA8"/><path d="M2.5 3h6M2.5 5h7M2.5 7h7M2.5 9h5M2.5 11h4" stroke="#A8B4C8" stroke-width=".9"/><circle cx="12" cy="11.5" r="3.5" fill="#3AAA50"/><path d="M10.5 11.5h3M12 10v3" stroke="#FFF" stroke-width="1.2"/></svg>
<div class="t m" style="left:624.6px;top:196px;color:#3A2E10">Групповая установка</div>
<div style="left:271px;top:214px;width:463px;height:1px;background:#D7CEB0"></div>
<div style="left:271px;top:223px;width:20px;height:72px;border:1px solid #C2B78F;border-right:none;border-radius:5px 0 0 5px"></div>
<div class="t" style="left:281px;top:219px;font-weight:bold;font-size:12px;color:#C46E10;background:#FBF9EE;padding:0 1px">С</div>
<div style="left:271px;top:310px;width:20px;height:95px;border:1px solid #C2B78F;border-right:none;border-radius:5px 0 0 5px"></div>
<div class="t" style="left:281px;top:306px;font-weight:bold;font-size:12px;color:#C46E10;background:#FBF9EE;padding:0 1px">П</div>
<div style="left:271px;top:464px;width:20px;height:350px;border:1px solid #C2B78F;border-right:none;border-radius:5px 0 0 5px"></div>
<div class="t" style="left:281px;top:460px;font-weight:bold;font-size:12px;color:#C46E10;background:#FBF9EE;padding:0 1px">С</div>
<div class="t" style="left:282px;top:245px;font-size:12px;color:#6A1A3A">Т</div>
<div class="t" style="left:282px;top:269px;font-weight:bold;font-size:12px;color:#1E1A10">С</div>
<div style="left:282px;top:322px;width:6px;height:8px;border:1px solid #777;background:#FFF;border-radius:1px"></div>
<div style="left:282px;top:343px;width:6px;height:8px;border:1px solid #777;background:#FFF;border-radius:1px"></div>
<div style="left:282px;top:363px;width:6px;height:8px;border:1px solid #777;background:#FFF;border-radius:1px"></div>
<div style="left:282px;top:383px;width:6px;height:17px;border:1px solid #C2B78F;border-radius:3px"></div>
<div style="left:282px;top:473px;width:6px;height:285px;border:1px solid #C2B78F;border-radius:3px;background:#FFF"></div>
<div style="left:282px;top:764px;width:6px;height:19px;border:1px solid #C2B78F;border-radius:4px;background:linear-gradient(90deg,#FBF9EE,#F2D79A)"></div>
<div style="left:282px;top:788px;width:6px;height:19px;border:1px solid #C2B78F;border-radius:4px;background:linear-gradient(90deg,#FBF9EE,#F2D79A)"></div>
<div style="left:560px;top:219px;width:128px;height:20px;background:#FBF9EE;border:1px solid #C2B78F;border-bottom:none;border-radius:7px 7px 0 0;border-top:2px solid #F2C46A"></div>
<div class="t m" style="left:591.5px;top:224px;color:#1B1A12">Список настроек</div>
<div style="left:694px;top:221px;width:60px;height:18px;background:linear-gradient(#EFEAD5,#E7E0C7);border:1px solid #C2B78F;border-bottom:none;border-radius:7px 7px 0 0"></div>
<div class="t m" style="left:704px;top:224px;color:#ABA284">Дополнительно</div>
<div style="left:560px;top:238px;width:180px;height:573px;background:#FFF;border:1px solid #C2B78F"></div>
<div style="left:561px;top:239px;width:173px;height:26px;background:#FBF9EE"></div>
<div style="left:561px;top:243px;width:173px;height:22px;background:linear-gradient(#FBF9EE,#EEE8D2);border-top:1px solid #E0D8BC;border-bottom:1px solid #D3C7A3"></div>
<div class="t m" style="left:632px;top:248px;color:#2A2618">Права или настройки</div>
<div style="left:561px;top:283px;width:173px;height:1px;background:#D3D9E0"></div>
<div style="left:561px;top:265px;width:173px;height:19px;overflow:hidden"><div class="t m" style="left:71px;top:4px;color:#111111">Перевод рабочего листа</div></div>
<div style="left:561px;top:302px;width:173px;height:1px;background:#D3D9E0"></div>
<div style="left:561px;top:284px;width:173px;height:19px;overflow:hidden"><div class="t m" style="left:71px;top:4px;color:#111111">Запрет на отгрузку с</div></div>
<div style="left:561px;top:321px;width:173px;height:1px;background:#D3D9E0"></div>
<div style="left:561px;top:303px;width:173px;height:19px;overflow:hidden"><div class="t m" style="left:71px;top:4px;color:#111111">Запрет на отгрузку с</div></div>
<div style="left:561px;top:340px;width:173px;height:1px;background:#D3D9E0"></div>
<div style="left:561px;top:322px;width:173px;height:19px;overflow:hidden"><div class="t m" style="left:71px;top:4px;color:#111111">Запрет на отгрузку с</div></div>
<div style="left:561px;top:359px;width:173px;height:1px;background:#D3D9E0"></div>
<div style="left:561px;top:341px;width:173px;height:19px;overflow:hidden"><div class="t m" style="left:71px;top:4px;color:#111111">Запрет просмотра з</div></div>
<div style="left:561px;top:378px;width:173px;height:1px;background:#D3D9E0"></div>
<div style="left:561px;top:360px;width:173px;height:19px;overflow:hidden"><div class="t m" style="left:71px;top:4px;color:#111111">Редактирование раб</div></div>
<div style="left:561px;top:397px;width:173px;height:1px;background:#D3D9E0"></div>
<div style="left:561px;top:379px;width:173px;height:19px;overflow:hidden"><div class="t m" style="left:71px;top:4px;color:#111111">Просмотр регистрац</div></div>
<div style="left:561px;top:416px;width:173px;height:1px;background:#D3D9E0"></div>
<div style="left:561px;top:398px;width:173px;height:19px;overflow:hidden"><div class="t m" style="left:71px;top:4px;color:#111111">Скрывать телефоны</div></div>
<div style="left:561px;top:435px;width:173px;height:1px;background:#D3D9E0"></div>
<div style="left:561px;top:417px;width:173px;height:19px;overflow:hidden"><div class="t m" style="left:71px;top:4px;color:#111111">Ограничение по кли</div></div>
<div style="left:561px;top:454px;width:173px;height:1px;background:#D3D9E0"></div>
<div style="left:561px;top:436px;width:173px;height:19px;overflow:hidden"><div class="t m" style="left:71px;top:4px;color:#111111">Режим экономии ли</div></div>
<div style="left:561px;top:473px;width:173px;height:1px;background:#D3D9E0"></div>
<div style="left:561px;top:455px;width:173px;height:19px;overflow:hidden"><div class="t m" style="left:71px;top:4px;color:#111111">Управленческая фу</div></div>
<div style="left:561px;top:474px;width:173px;height:19px;background:#4C64C6;outline:1px dotted #C8D0F0;outline-offset:-1px"></div>
<div style="left:561px;top:492px;width:173px;height:1px;background:#D3D9E0"></div>
<div style="left:561px;top:474px;width:173px;height:19px;overflow:hidden"><div class="t m" style="left:71px;top:4px;color:#FFFFFF">УстановкаЦеныПра</div></div>
<div style="left:561px;top:511px;width:173px;height:1px;background:#D3D9E0"></div>
<div style="left:561px;top:493px;width:173px;height:19px;overflow:hidden"><div class="t m" style="left:71px;top:4px;color:#111111">Установка цены пра</div></div>
<div style="left:561px;top:530px;width:173px;height:1px;background:#D3D9E0"></div>
<div style="left:561px;top:512px;width:173px;height:19px;overflow:hidden"><div class="t m" style="left:71px;top:4px;color:#111111">Редактирование раб</div></div>
<div style="left:561px;top:549px;width:173px;height:1px;background:#D3D9E0"></div>
<div style="left:561px;top:531px;width:173px;height:19px;overflow:hidden"><div class="t m" style="left:71px;top:4px;color:#111111">Редактирование ста</div></div>
<div style="left:561px;top:568px;width:173px;height:1px;background:#D3D9E0"></div>
<div style="left:561px;top:550px;width:173px;height:19px;overflow:hidden"><div class="t m" style="left:71px;top:4px;color:#111111">Редактирование цен</div></div>
<div style="left:561px;top:587px;width:173px;height:1px;background:#D3D9E0"></div>
<div style="left:561px;top:569px;width:173px;height:19px;overflow:hidden"><div class="t m" style="left:71px;top:4px;color:#111111">Изменение неизмен</div></div>
<div style="left:561px;top:606px;width:173px;height:1px;background:#D3D9E0"></div>
<div style="left:561px;top:588px;width:173px;height:19px;overflow:hidden"><div class="t m" style="left:71px;top:4px;color:#111111">Запрет просмотра ж</div></div>
<div style="left:561px;top:625px;width:173px;height:1px;background:#D3D9E0"></div>
<div style="left:561px;top:607px;width:173px;height:19px;overflow:hidden"><div class="t m" style="left:71px;top:4px;color:#111111">Сделать дату рабоче</div></div>
<div style="left:561px;top:644px;width:173px;height:1px;background:#D3D9E0"></div>
<div style="left:561px;top:626px;width:173px;height:19px;overflow:hidden"><div class="t m" style="left:71px;top:4px;color:#111111">Задействовать прове</div></div>
<div style="left:561px;top:663px;width:173px;height:1px;background:#D3D9E0"></div>
<div style="left:561px;top:645px;width:173px;height:19px;overflow:hidden"><div class="t m" style="left:71px;top:4px;color:#111111">Добавить папку в сп</div></div>
<div style="left:561px;top:682px;width:173px;height:1px;background:#D3D9E0"></div>
<div style="left:561px;top:664px;width:173px;height:19px;overflow:hidden"><div class="t m" style="left:71px;top:4px;color:#111111">Иная форма потенц</div></div>
<div style="left:561px;top:701px;width:173px;height:1px;background:#D3D9E0"></div>
<div style="left:561px;top:683px;width:173px;height:19px;overflow:hidden"><div class="t m" style="left:71px;top:4px;color:#111111">Доступ к отказам от</div></div>
<div style="left:561px;top:720px;width:173px;height:1px;background:#D3D9E0"></div>
<div style="left:561px;top:702px;width:173px;height:19px;overflow:hidden"><div class="t m" style="left:71px;top:4px;color:#111111">Фильтр нормачасов</div></div>
<div style="left:561px;top:739px;width:173px;height:1px;background:#D3D9E0"></div>
<div style="left:561px;top:721px;width:173px;height:19px;overflow:hidden"><div class="t m" style="left:71px;top:4px;color:#111111">Право изменять цен</div></div>
<div style="left:561px;top:758px;width:173px;height:1px;background:#D3D9E0"></div>
<div style="left:561px;top:740px;width:173px;height:19px;overflow:hidden"><div class="t m" style="left:71px;top:4px;color:#111111">Доступ специализац</div></div>
<div style="left:561px;top:777px;width:173px;height:1px;background:#D3D9E0"></div>
<div style="left:561px;top:759px;width:173px;height:19px;overflow:hidden"><div class="t m" style="left:71px;top:4px;color:#111111">Перевод рабочего л</div></div>
<div style="left:561px;top:796px;width:173px;height:1px;background:#D3D9E0"></div>
<div style="left:561px;top:778px;width:173px;height:19px;overflow:hidden"><div class="t m" style="left:71px;top:4px;color:#111111">Сохранять контраге</div></div>
<div style="left:561px;top:797px;width:173px;height:12px;overflow:hidden"><div class="t m" style="left:71px;top:4px;color:#111111">Новые формы комп</div></div>
<div style="left:266px;top:815px;width:474px;height:1px;background:#C2B78F"></div>
<div style="left:266px;top:822px;width:474px;height:1px;background:#C2B78F"></div>
<div style="left:262px;top:826px;width:472px;height:1px;background:#C2B78F"></div>
<div style="left:262px;top:827px;width:472px;height:24px;background:#F3EFDB"></div>
<div style="left:260px;top:851px;width:474px;height:2px;background:#FFFFFF"></div>
<div style="left:256px;top:853px;width:478px;height:4px;background:#F8F5E8"></div>
<div style="left:0px;top:857px;width:734px;height:18px;background:#B0B0B0"></div>
<div class="t" style="left:-6px;top:860px;font-weight:bold;font-size:12px;color:#7B756A">Служебные сообщения</div>
<div style="left:0px;top:875px;width:734px;height:102px;background:#FFFFFF"></div>
<div style="left:0px;top:875px;width:8px;height:102px;background:repeating-conic-gradient(#DAD6C0 0 25%,#F2EFDE 0 50%) 0 0/2px 2px"></div>
<div style="left:0px;top:883px;width:2px;height:2px;background:#8A9AA8"></div>
<div style="left:0px;top:899px;width:2px;height:2px;background:#8A9AA8"></div>
<div style="left:0px;top:915px;width:2px;height:2px;background:#8A9AA8"></div>
<div style="left:0px;top:930px;width:2px;height:2px;background:#8A9AA8"></div>
<div class="t" style="left:10px;top:893px;font-family:'Liberation Mono',monospace;font-size:13.33px;color:#303030;line-height:16px">Производится начальное заполнение информационной базы<br>Установка констант завершена.</div>
<div style="left:11px;top:931px;width:552px;height:1px;background:repeating-linear-gradient(90deg,#111 0 6px,transparent 6px 8px)"></div>
<div style="left:0px;top:977px;width:734px;height:17px;background:linear-gradient(#F6F3E4,#EFEAD4);border-top:1px solid #CFC6A6"></div>
<div style="left:0px;top:978px;width:10px;height:16px;background:#F1EDDD;border-right:1px solid #D8D0B4"></div>
<svg style="left:1px;top:982px" width="6" height="8" viewBox="0 0 6 8"><path d="M5 0v8L0 4z" fill="#BDB8A8"/></svg>
<svg style="left:702px;top:982px" width="8" height="8" viewBox="0 0 8 8"><circle cx="4" cy="4" r="2.5" fill="#D0CCC0"/></svg>
<div style="left:0px;top:994px;width:734px;height:20px;background:#F4F0DD"></div>
<div style="left:0px;top:994px;width:162px;height:20px;background:#B1B1B1;border:1px solid #C8BC98"></div>
<svg style="left:-7px;top:996px" width="16" height="16" viewBox="0 0 16 16"><path d="M4 5l5-4 6 4z" fill="#D8202A"/><rect x="5" y="5" width="9" height="9" fill="#F6F6F6" stroke="#BBB" stroke-width=".5"/><path d="M6.5 7h2v2h-2zM10.5 7h2v2h-2z" fill="#3BA7C0"/><path d="M0 11l3.5-3 3.5 3z" fill="#D8202A"/><rect x="1" y="11" width="5" height="4" fill="#F4F4F4"/><path d="M0 15h16" stroke="#2E9E3A" stroke-width="1.5"/><path d="M10 15l3-3 3 3z" fill="#D8202A"/></svg>
<div class="t m" style="left:10.5px;top:999px;color:#1E1C18;transform:scaleX(.9)">Подразделения компании</div>
<div style="left:165px;top:994px;width:171px;height:20px;background:#B1B1B1;border:1px solid #C8BC98"></div>
<svg style="left:165px;top:996px" width="16" height="16" viewBox="0 0 16 16"><path d="M4 5l5-4 6 4z" fill="#D8202A"/><rect x="5" y="5" width="9" height="9" fill="#F6F6F6" stroke="#BBB" stroke-width=".5"/><path d="M6.5 7h2v2h-2zM10.5 7h2v2h-2z" fill="#3BA7C0"/><path d="M0 11l3.5-3 3.5 3z" fill="#D8202A"/><rect x="1" y="11" width="5" height="4" fill="#F4F4F4"/><path d="M0 15h16" stroke="#2E9E3A" stroke-width="1.5"/><path d="M10 15l3-3 3 3z" fill="#D8202A"/></svg>
<div class="t m" style="left:182.5px;top:999px;color:#1E1C18;transform:scaleX(.9)">ДЦ Бк ОДО</div>
<div style="left:339px;top:994px;width:170px;height:20px;background:#B1B1B1;border:1px solid #C8BC98"></div>
<svg style="left:341px;top:996px" width="16" height="16" viewBox="0 0 16 16"><path d="M8 1l6 2v5c0 4-3 6-6 7-3-1-6-3-6-7V3z" fill="#E8C020"/><path d="M8 1v7H2V3z" fill="#D83020"/><path d="M8 1l6 2v5H8z" fill="#3A9A40"/><path d="M2 8h6v7c-3-1-6-3-6-7z" fill="#2E70C8"/></svg>
<div class="t m" style="left:356.5px;top:999px;color:#1E1C18;transform:scaleX(.9)">АРМ [Администратор]</div>
<div style="left:511px;top:994px;width:171px;height:20px;background:#B1B1B1;border:1px solid #C8BC98"></div>
<svg style="left:512px;top:996px" width="16" height="16" viewBox="0 0 16 16"><path d="M4 6c0-5 8-6 8-1v3c0 3-2 5-4 5s-4-2-4-5z" fill="#F1C88D"/><path d="M3 6c-1-5 9-7 10-1l-1 2c-1-2-3-3-5-2-1 0-2 1-4 1z" fill="#E8C040"/><path d="M2 16c0-3 2-4 4-4h4c2 0 4 1 4 4z" fill="#2E8A3A"/></svg>
<div class="t m" style="left:528.5px;top:999px;color:#1E1C18;transform:scaleX(.9)">Список пользователей (ИР)</div>
<div style="left:684px;top:994px;width:60px;height:20px;background:#B1B1B1;border:1px solid #C8BC98"></div>
<svg style="left:684px;top:996px" width="16" height="16" viewBox="0 0 16 16"><circle cx="2.5" cy="2" r="1.6" fill="#D88A50"/><circle cx="6" cy="2" r="1.6" fill="#D88A50"/><circle cx="9.5" cy="2" r="1.6" fill="#D88A50"/><circle cx="13" cy="2" r="1.6" fill="#D88A50"/><rect x="0.5" y="4" width="15" height="5" fill="#2C6AC0"/><rect x="0.5" y="9" width="15" height="7" fill="#7A4A20"/><path d="M4.2 4v12M7.8 4v12M11.3 4v12" stroke="#3E2410" stroke-width=".8"/></svg>
<div class="t m" style="left:700.5px;top:999px;color:#1E1C18;transform:scaleX(.9)">Сотрудники</div>
<div style="left:0px;top:1014px;width:734px;height:22px;background:#F4F0DD"></div>
<div style="left:0px;top:1016px;width:734px;height:1px;background:#DCD5BF"></div>
<div style="left:0px;top:1034px;width:734px;height:1px;background:#DCD5BF"></div>
<div class="t m" style="left:-6.3px;top:1020px;color:#1B1A12;transform:scaleX(.909)">Открыть обработку Поиск проблемных документов из арм кладовщика</div>
<div style="left:0px;top:1036px;width:734px;height:40px;background:#1E241E"></div>
<div style="left:0px;top:1036px;width:38px;height:40px;background:#1C1C1C"></div>
<svg style="left:5px;top:1047px" width="18" height="18" viewBox="0 0 18 18"><path d="M0.7 2.2L7 1.3V7.5H0.7zM7.8 1.2L17.2 0V7.5H7.8zM0.7 8.8H7V15L0.7 14.2zM7.8 8.8H17.2V17.3L7.8 15.9z" fill="#FFFFFF"/></svg>
<div style="left:38px;top:1036px;width:344px;height:40px;background:#F0F0F0"></div>
<svg style="left:50px;top:1047px" width="17" height="17" viewBox="0 0 17 17"><circle cx="10.5" cy="6.5" r="5.5" fill="none" stroke="#1E1E1E" stroke-width="1.5"/><path d="M6.5 10.5L1 16" stroke="#1E1E1E" stroke-width="1.6"/></svg>
<div class="t" style="left:79px;top:1049px;font-size:15px;color:#2A2A2A">Чтобы начать поиск, введите здесь запрос</div>
<svg style="left:398px;top:1048px" width="17" height="15" viewBox="0 0 17 15"><path d="M0 0.6h13M0 14.4h13" stroke="#FFF" stroke-width="1.2"/><rect x="0.6" y="3.6" width="11.8" height="7.8" fill="none" stroke="#FFF" stroke-width="1.2"/><path d="M15.5 0v2.5M15.5 12v3" stroke="#FFF" stroke-width="1.2"/><rect x="14.6" y="4.6" width="1.8" height="4.8" fill="none" stroke="#FFF" stroke-width="1.2"/></svg>
<svg style="left:446px;top:1045px" width="22" height="22" viewBox="0 0 22 22"><path d="M11 1C5 1 1 5.5 1 11.5S5.5 21 11.5 21c3 0 5.5-1 7.5-2.5v-4c-2 1.8-4.5 2.8-7 2.8-3 0-5.5-1.8-5.8-4.8H21v-1.5C21 5.5 17 1 11 1zm-4.8 8.2C6.6 6.8 8.6 5 11 5s4.2 1.8 4.4 4.2z" fill="#1B7FD8"/></svg>
<svg style="left:493px;top:1043px" width="25" height="25" viewBox="0 0 25 25"><circle cx="12.5" cy="13" r="11" fill="#FF6A2A"/><circle cx="12.5" cy="13" r="11" fill="url(#ffg)"/><defs><radialGradient id="ffg" cx=".7" cy=".2" r=".9"><stop offset="0" stop-color="#FFE040"/><stop offset=".5" stop-color="#FF7A20"/><stop offset="1" stop-color="#E0204A"/></radialGradient></defs><circle cx="13" cy="14" r="5.5" fill="#7A3AD0"/><path d="M4 6c2 5 6 9 12 8" stroke="#FFB030" stroke-width="2" fill="none"/></svg>
<div style="left:487px;top:1074px;width:40px;height:2px;background:#8AB4E6"></div>
<svg style="left:543px;top:1046px" width="22" height="20" viewBox="0 0 22 20"><path d="M1 3h7l2 2h11v14H1z" fill="#F3C33C"/><path d="M1 7h20v12H1z" fill="#FFD966"/><path d="M7 12h8v7h-2.5v-4h-3v4H7z" fill="#2F8AD8"/></svg>
<svg style="left:594px;top:1043px" width="20" height="26" viewBox="0 0 20 26"><path d="M2 3h10l3 3-3 2H2z" fill="#BFBFBF"/><rect x="5" y="6" width="3" height="18" fill="#E8E040"/><rect x="9" y="10" width="10" height="13" fill="#FFF" stroke="#888" stroke-width=".6"/><path d="M11 13v8M14 13v8M17 13v8" stroke="#C0203A" stroke-width="1.8"/></svg>
<svg style="left:641px;top:1044px" width="23" height="23" viewBox="0 0 23 23"><defs><linearGradient id="npg" x1="0" y1="1" x2="1" y2="0"><stop offset="0" stop-color="#2E7C98"/><stop offset=".6" stop-color="#7CC8D8"/><stop offset="1" stop-color="#D8F0F4"/></linearGradient></defs><path d="M1 19L9 2l13 3-7 17z" fill="url(#npg)"/><path d="M9 2l13 3-1 2.5L8 4.5z" fill="#E8F4F8"/><path d="M15 22l7-17 1 2-6.5 15.5z" fill="#C8A060"/></svg>
<svg style="left:690px;top:1044px" width="22" height="22" viewBox="0 0 22 22"><rect x="4" y="1" width="17" height="20" fill="#FFF" stroke="#8AA8D8" stroke-width=".8"/><rect x="1" y="4" width="14" height="13" fill="#2A5AB8"/><text x="2" y="15" font-size="12" font-family="Liberation Sans" font-weight="bold" fill="#FFF">W</text></svg>
<div style="left:535px;top:1074px;width:39px;height:2px;background:#8AB4E6"></div>
<div style="left:584px;top:1074px;width:40px;height:2px;background:#8AB4E6"></div>
<div style="left:633px;top:1074px;width:40px;height:2px;background:#8AB4E6"></div>
<div style="left:682px;top:1074px;width:40px;height:2px;background:#8AB4E6"></div>
<div style="left:720px;top:1074px;width:14px;height:2px;background:#8AB4E6"></div>
<div style="left:285px;top:39px;width:355px;height:913px;background:#FBF8EA;border:1px solid #8C8C8C"></div>
<div style="left:286px;top:40px;width:25px;height:911px;background:#EBE6CF"></div>
<svg style="left:291px;top:44px" width="16" height="16" viewBox="0 0 16 16"><rect x="0.5" y="0.5" width="15" height="15" rx="1.5" fill="#FFFF00" stroke="#C0141C"/><path d="M2.5 8.5L4.5 2.5L6.5 8.5M3.2 6.5H5.8M7.3 12.5V5.5H9Q10.5 5.5 10.5 7.5Q10.5 9.5 9 9.5H7.3M9.8 13.8V8.5L11.9 11.5L14 8.5V13.8" stroke="#C0141C" stroke-width="1.2" fill="none"/></svg>
<div class="t m" style="left:319px;top:46px;color:#1E1A10;transform:scaleX(0.8817)">Рабочее место (АРМ)</div>
<div style="left:315px;top:65px;width:319px;height:1px;background:#DCD5BE"></div>
<svg style="left:291px;top:71px" width="16" height="16" viewBox="0 0 16 16"><rect x="0.5" y="0.5" width="15" height="15" rx="1.5" fill="#FFFF00" stroke="#C0141C"/><path d="M4 2h7.5v2H8.8v1.7H11V7H8.8v2.5H10V14H6V9.5h1.2V7H4.5V5.7h2.7V4H4z" fill="#A00A14"/></svg>
<div class="t m" style="left:319px;top:73px;color:#1E1A10;transform:scaleX(0.8900)">Рабочее место сотрудника цеха (АРМ)</div>
<div style="left:287px;top:91px;width:351px;height:21px;background:linear-gradient(#F0F6FE,#DCEBFC 50%,#CFE3FB);border:1px solid #9DBCEB;border-radius:3px"></div>
<svg style="left:291px;top:94px" width="16" height="16" viewBox="0 0 16 16"><defs><linearGradient id="fwg" x1="0" x2="1"><stop offset="0" stop-color="#0A20A0"/><stop offset="1" stop-color="#20E0F8"/></linearGradient></defs><rect x="3.5" y="0.5" width="12" height="9" fill="#FFFFFF" stroke="#8A8A8A"/><rect x="4" y="1" width="11" height="1.5" fill="url(#fwg)"/><circle cx="5.5" cy="7.5" r="4.2" fill="#FFFFFF" fill-opacity=".35" stroke="#5A5A2A" stroke-width="1"/><path d="M8.5 10.5l4.5 4.5" stroke="#C86020" stroke-width="2"/><path d="M8.5 10.5l2 2" stroke="#E8D040" stroke-width="2"/></svg>
<div class="t m" style="left:319px;top:96px;color:#2A3C90;transform:scaleX(0.9111)">Поиск проблемных документов из арм кладовщика</div>
<svg style="left:291px;top:117px" width="16" height="16" viewBox="0 0 16 16"><path d="M4.5 6.5l2-2h6v7l-2 2h-6z" fill="#D89A28"/><path d="M4.5 6.5l2-2h6l-2 2z" fill="#E8D8A0"/><path d="M10.5 6.5l2-2v7l-2 2z" fill="#A86A10"/><path d="M1.5 7V4Q1.5 1.5 4 1.5h2M9.5 1.5H12Q14.5 1.5 14.5 4v1.5M14.5 9v3q0 2.5-2.5 2.5H10M6.5 14.5H4q-2.5 0-2.5-2.5V11" stroke="#1020A0" stroke-width="1.3" fill="none"/><path d="M0 6h3l-1.5 2.5zM11.5 0v3l2.5-1.5zM13 6.5h3l-1.5-2.5zM4.5 13v3l-2.5-1.5z" fill="#1020A0"/></svg>
<div class="t m" style="left:319px;top:119px;color:#1E1A10;transform:scaleX(0.8941)">АРМ Кладовщика</div>
<div style="left:315px;top:138px;width:319px;height:1px;background:#DCD5BE"></div>
<div class="t m" style="left:319px;top:146px;color:#1E1A10;transform:scaleX(0.9372)">Фронт кассира</div>
<div class="t m" style="left:319px;top:169px;color:#1E1A10;transform:scaleX(0.9051)">Календарь пользователя</div>
<div class="t m" style="left:319px;top:192px;color:#1E1A10;transform:scaleX(0.8987)">Монитор автосервиса</div>
<div class="t m" style="left:319px;top:215px;color:#1E1A10;transform:scaleX(0.9032)">Монитор автосервиса v3</div>
<div class="t m" style="left:319px;top:238px;color:#1E1A10;transform:scaleX(0.8835)">Монитор цеха доп оборудования</div>
<div class="t m" style="left:319px;top:261px;color:#1E1A10;transform:scaleX(0.9188)">Закрытие кассовой смены</div>
<div class="t m" style="left:319px;top:284px;color:#1E1A10;transform:scaleX(0.9124)">Печать этикеток и ценников</div>
<div style="left:315px;top:303px;width:319px;height:1px;background:#DCD5BE"></div>
<svg style="left:291px;top:309px" width="16" height="16" viewBox="0 0 16 16"><path d="M0.5 16V12c0-2 1.5-3 3.5-3s3.5 1 3.5 3v4z" fill="#1F3F9A"/><path d="M3.5 9.5h1l.3 5-.8 1-.8-1z" fill="#20B0B0"/><circle cx="4" cy="6" r="3.2" fill="#F4C890"/><path d="M0.8 6c0-4 6.4-4 6.4 0L6.5 4.5h-5z" fill="#E8C030"/><circle cx="1.5" cy="3" r=".8" fill="#D02020"/><circle cx="6" cy="2.3" r=".8" fill="#D02020"/><path d="M3 8h2" stroke="#D04040" stroke-width=".8"/><path d="M8.5 16V11.5c0-2 1.5-3.5 3.5-3.5s3.5 1.5 3.5 3.5V16z" fill="#1F3F9A"/><path d="M11.5 9h1l.3 5.5-.8 1-.8-1z" fill="#20B0B0"/><circle cx="12" cy="5.5" r="3.3" fill="#F4C890"/><path d="M8.7 5.5c0-4.2 6.6-4.2 6.6 0L14.5 4h-5z" fill="#E8C030"/><circle cx="10" cy="2" r=".8" fill="#D02020"/><circle cx="14.5" cy="3" r=".8" fill="#D02020"/><path d="M11 7.5h2" stroke="#D04040" stroke-width=".8"/></svg>
<div class="t m" style="left:319px;top:311px;color:#1E1A10;transform:scaleX(0.9170)">Поиск контрагентов и контактных лиц</div>
<div class="t m" style="left:572px;top:312px;color:#A8954C;transform:scaleX(.9)">Alt+Shift+F</div>
<div class="t m" style="left:319px;top:334px;color:#1E1A10;transform:scaleX(0.8993)">Обработка документов</div>
<div class="t m" style="left:319px;top:357px;color:#1E1A10;transform:scaleX(0.9032)">Пакетная печать</div>
<svg style="left:291px;top:378px" width="16" height="16" viewBox="0 0 16 16"><path d="M1 10l4-3h9l1 3v3l-2 2H2l-1-2z" fill="#9AA4C0"/><path d="M1 10l4-3h9l1 3z" fill="#D8DCE8"/><rect x="6" y="11.5" width="5" height="1.3" fill="#C8B040"/><path d="M4 8c0-5 7-6 8-2h2l-3 4-3-4h2c-1-2-4-1-4 2z" fill="#20A830"/></svg>
<div class="t m" style="left:319px;top:380px;color:#1E1A10;transform:scaleX(0.8874)">Внешние обработки и отчеты</div>
<svg style="left:291px;top:401px" width="16" height="16" viewBox="0 0 16 16"><rect x="5.5" y="2.5" width="10" height="12" fill="#F0F0F4" stroke="#7A7A80"/><rect x="11" y="3" width="4" height="2.5" fill="#2060E0"/><path d="M8.5 9.5l5.5 5.5" stroke="#F0A020" stroke-width="2.2"/><circle cx="5.5" cy="6" r="4.6" fill="#B8D060" fill-opacity=".85" stroke="#F0A020" stroke-width="1.5"/></svg>
<div class="t m" style="left:319px;top:403px;color:#1E1A10;transform:scaleX(0.9170)">Полнотекстовый поиск</div>
<div style="left:315px;top:422px;width:319px;height:1px;background:#DCD5BE"></div>
<div class="t m" style="left:319px;top:430px;color:#1E1A10;transform:scaleX(0.8996)">Клиент банка</div>
<div class="t m" style="left:319px;top:453px;color:#1E1A10;transform:scaleX(0.9069)">Курсы валют РБК</div>
<div class="t m" style="left:319px;top:476px;color:#1E1A10;transform:scaleX(0.9344)">Загрузка банков</div>
<div style="left:315px;top:495px;width:319px;height:1px;background:#DCD5BE"></div>
<div class="t m" style="left:319px;top:503px;color:#1E1A10;transform:scaleX(0.8987)">Выгрузка данных в бухгалтерию</div>
<div class="t m" style="left:319px;top:526px;color:#1E1A10;transform:scaleX(0.9042)">Загрузка данных из бухгалтерии</div>
<svg style="left:291px;top:547px" width="16" height="16" viewBox="0 0 16 16"><path d="M11 0.5L15 4.5L11 8.5L7 4.5z" fill="#F8D830" stroke="#E0B020" stroke-width=".7"/><rect x="0.5" y="8.5" width="9" height="6.5" rx="2" fill="#9AD0F0" stroke="#3A78B0"/><path d="M4.5 4.5V11M4.5 4.5H8" stroke="#000" stroke-width="1" stroke-dasharray="1 1"/><path d="M2.3 10.5h4.4L4.5 13.2z" fill="#000"/></svg>
<div class="t m" style="left:319px;top:549px;color:#1E1A10;transform:scaleX(0.8950)">Обмен с удаленными подразделениями</div>
<div class="t m" style="left:319px;top:572px;color:#1E1A10;transform:scaleX(0.8996)">Параметры обмена данными</div>
<div style="left:315px;top:591px;width:319px;height:1px;background:#DCD5BE"></div>
<svg style="left:291px;top:597px" width="16" height="16" viewBox="0 0 16 16"><path d="M1 5.5C3 1 8 0 13 1 8 2 4 4 2 6.5z" fill="#E06010"/><path d="M0 14.5c6 0 12-1 16-6-1 5-7 8-16 7.5z" fill="#E06010"/><path d="M5 11L7.5 4h1.5L11 11M6 9h4" stroke="#111" stroke-width="1.4" fill="none"/></svg>
<div class="t m" style="left:319px;top:599px;color:#1E1A10;transform:scaleX(0.8936)">Обмен с AudaPad Web</div>
<div class="t m" style="left:319px;top:622px;color:#1E1A10;transform:scaleX(0.9023)">Обмен с сайтом</div>
<div class="t m" style="left:319px;top:645px;color:#1E1A10;transform:scaleX(0.8895)">Обмен с DMSBB</div>
<div class="t m" style="left:319px;top:668px;color:#1E1A10;transform:scaleX(0.8964)">Обмен с сайтом АВСР</div>
<svg style="left:626px;top:670px" width="6" height="10" viewBox="0 0 6 10"><path d="M0 0v9.5l5.5-4.75z" fill="#2E2810"/></svg>
<div style="left:315px;top:687px;width:319px;height:1px;background:#DCD5BE"></div>
<div class="t m" style="left:319px;top:695px;color:#1E1A10;transform:scaleX(0.9021)">Мастер проверки и заполнения планов</div>
<div style="left:315px;top:714px;width:319px;height:1px;background:#DCD5BE"></div>
<div class="t m" style="left:319px;top:722px;color:#1E1A10;transform:scaleX(0.9021)">Перемещение деталей в производство</div>
<div class="t m" style="left:319px;top:745px;color:#1E1A10;transform:scaleX(0.9124)">Расчет минимального остатка товаров</div>
<div class="t m" style="left:319px;top:768px;color:#1E1A10;transform:scaleX(0.9198)">Загрузка номенклатуры из автокаталога</div>
<div class="t m" style="left:319px;top:791px;color:#1E1A10;transform:scaleX(0.9097)">Загрузка данных из табличного документа</div>
<div class="t m" style="left:319px;top:814px;color:#1E1A10;transform:scaleX(0.9023)">Взаимоотношения с клиентами</div>
<svg style="left:626px;top:816px" width="6" height="10" viewBox="0 0 6 10"><path d="M0 0v9.5l5.5-4.75z" fill="#2E2810"/></svg>
<div class="t m" style="left:319px;top:837px;color:#1E1A10;transform:scaleX(0.8849)">Шаблоны документов</div>
<div style="left:315px;top:856px;width:319px;height:1px;background:#DCD5BE"></div>
<div class="t m" style="left:319px;top:864px;color:#1E1A10;transform:scaleX(0.8666)">Служебные</div>
<svg style="left:626px;top:866px" width="6" height="10" viewBox="0 0 6 10"><path d="M0 0v9.5l5.5-4.75z" fill="#2E2810"/></svg>
<div class="t m" style="left:319px;top:887px;color:#1E1A10;transform:scaleX(0.8574)">Центр СМС</div>
<div class="t m" style="left:319px;top:910px;color:#1E1A10;transform:scaleX(0.9023)">Обмен с внешними системами</div>
<svg style="left:626px;top:912px" width="6" height="10" viewBox="0 0 6 10"><path d="M0 0v9.5l5.5-4.75z" fill="#2E2810"/></svg>
<div class="t m" style="left:319px;top:933px;color:#1E1A10;transform:scaleX(0.8739)">Ведомость QCC</div>
</body></html>
